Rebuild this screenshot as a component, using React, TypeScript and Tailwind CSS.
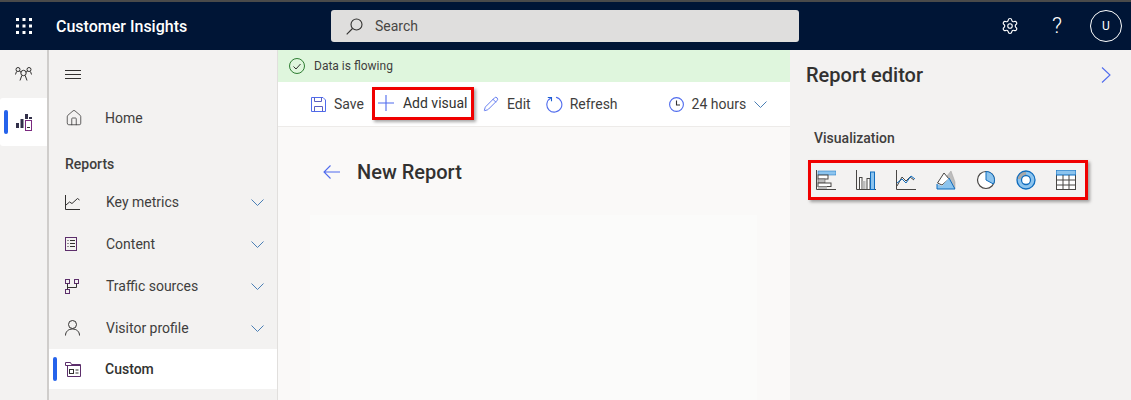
import React from 'react';
import { Settings, Pencil, Home } from 'lucide-react';

const GridDots = () => (
  <svg width="16" height="16" viewBox="0 0 16 16" fill="white">
    {[0, 6.5, 13].map((y) =>
      [0, 6.5, 13].map((x) => <rect key={`${x}-${y}`} x={x} y={y} width="3" height="3" />)
    )}
  </svg>
);

const SearchGlass = () => (
  <svg width="17" height="17" viewBox="0 0 17 17" fill="none" stroke="#323130" strokeWidth="1.100">
    <circle cx="10.500" cy="6.500" r="5.500" />
    <path d="M6.500 10.500L.7 16.300" />
  </svg>
);

const Chevron = () => (
  <svg width="13" height="7" viewBox="0 0 13 7" fill="none" stroke="#4a7fb5">
    <path d="M.5.5l6 6 6-6" />
  </svg>
);

const PeopleIcon = () => (
  <svg width="17" height="14" viewBox="0 0 17 14" fill="none" stroke="#323130">
    <circle cx="3" cy="2.500" r="2" />
    <circle cx="14" cy="2.500" r="2" />
    <circle cx="8.500" cy="6" r="2.700" />
    <path d="M.5 7.500L1.500 4.500M16.500 7.500L15.500 4.500M4.500 4.500L6.300 5M12.500 4.500L10.700 5M5 13.500L6.800 8.500M12 13.500L10.200 8.500" />
  </svg>
);

const ReportsIcon = () => (
  <svg width="16" height="17" viewBox="0 0 16 17">
    <rect x="0" y="9" width="3" height="5" fill="#32304a" />
    <rect x="4.500" y="5" width="3" height="9" fill="#32304a" />
    <rect x="9" y="0" width="3" height="5" fill="#32304a" />
    <rect x="13" y="3" width="3" height="2" fill="#32304a" />
    <rect x="9.500" y="6.500" width="6" height="10" fill="none" stroke="#7a2a80" />
    <path d="M11 13.500h3" stroke="#323130" />
  </svg>
);

const LineChartIcon = () => (
  <svg width="15" height="15" viewBox="0 0 15 15" fill="none" stroke="#323130">
    <path d="M.5 0v14.500H15M1 10l3.500-3 2.500 1.500 5.500-5 2 1.500" />
  </svg>
);

const ContentIcon = () => (
  <svg width="12" height="14" viewBox="0 0 12 14" fill="none" stroke="#5c2e6b">
    <rect x=".5" y=".5" width="11" height="13" />
    <path d="M2.500 3.500h1M5 3.500h5M2.500 6.500h1M5 6.500h5M2.500 9.500h1M5 9.500h5" stroke="#323130" />
  </svg>
);

const TrafficIcon = () => (
  <svg width="14" height="15" viewBox="0 0 14 15" fill="none">
    <rect x=".5" y=".5" width="4" height="4" stroke="#5c2e6b" />
    <rect x="9.500" y=".5" width="4" height="4" stroke="#5c2e6b" />
    <rect x=".5" y="10.500" width="4" height="4" stroke="#5c2e6b" />
    <path d="M2.500 4.500v6M2.500 8.500h9v-4" stroke="#323130" />
  </svg>
);

const UserIcon = () => (
  <svg width="15" height="16" viewBox="0 0 15 16" fill="none" stroke="#323130">
    <circle cx="7.500" cy="4.500" r="4" />
    <path d="M.5 15.500c0-4 3-6.500 7-6.500s7 2.500 7 6.500" />
  </svg>
);

const CustomIcon = () => (
  <svg width="16" height="15" viewBox="0 0 16 15" fill="none">
    <path d="M.5 3.500v-3h5l1 2h9v12h-13v-11" stroke="#5c2e6b" />
    <path d="M.5 3.500h15" stroke="#5c2e6b" />
    <rect x="4.500" y="7.500" width="4" height="4" stroke="#323130" />
    <path d="M10.500 8h3M10.500 11h3" stroke="#323130" />
  </svg>
);

const SaveIcon = () => (
  <svg width="15" height="15" viewBox="0 0 15 15" fill="none" stroke="#4f6bed">
    <path d="M.5.5h11.500l2.500 2.500v11.500H.5z" />
    <path d="M3.500.5v4h7v-4M3.500 14.500v-5h8v5" stroke="#5a5fc0" />
  </svg>
);

const PlusIcon = () => (
  <svg width="16" height="16" viewBox="0 0 16 16" fill="none" stroke="#4f6bed" strokeWidth="1.100">
    <path d="M8 0v16M0 8h16" />
  </svg>
);

const RefreshIcon = () => (
  <svg width="17" height="17" viewBox="0 0 17 17" fill="none" stroke="#4f6bed" strokeWidth="1.100">
    <path d="M5 1.900A7.500 7.500 0 1 0 10 1.300" />
    <path d="M1.800 1.500h3.700v3.700" stroke="#1a5fd0" />
  </svg>
);

const ClockIcon = () => (
  <svg width="15" height="15" viewBox="0 0 15 15" fill="none" stroke="#4f6bed" strokeWidth="1.100">
    <circle cx="7.500" cy="7.500" r="6.900" />
    <path d="M7.500 3.500v4.500h3.500" stroke="#323130" />
  </svg>
);

const FlowingIcon = () => (
  <svg width="16" height="16" viewBox="0 0 16 16" fill="none">
    <circle cx="8" cy="8" r="7.500" stroke="#2e7d32" />
    <path d="M4.500 8.500l2.500 2.500 4.500-5" stroke="#323130" />
  </svg>
);

const ArrowLeftIcon = () => (
  <svg width="17" height="14" viewBox="0 0 17 14" fill="none" stroke="#4f6bed" strokeWidth="1.100">
    <path d="M17 7H1M7.500.5L1 7l6.500 6.500" />
  </svg>
);

const CollapseIcon = () => (
  <svg width="10" height="16" viewBox="0 0 10 16" fill="none" stroke="#4f6bed" strokeWidth="1.100">
    <path d="M1 .5L9 8l-8 7.500" />
  </svg>
);

const BLUE = '#0f6cbd';
const LIGHT = '#8cc4ee';
const GRAY = '#bdbdbd';
const DARK = '#484644';

const viz = [
  <>
    <rect x="2" y="1" width="18" height="4" fill={LIGHT} stroke={BLUE} strokeWidth=".5" />
    <rect x="2" y="5" width="10" height="4" fill="#fff" stroke={DARK} />
    <rect x="2" y="9" width="7" height="4" fill={GRAY} stroke={DARK} strokeWidth=".5" />
    <rect x="2" y="13" width="13" height="3.500" fill="#fff" stroke={DARK} />
    <rect x="2" y="16.500" width="9" height="2.500" fill={GRAY} />
    <path d="M.5 0v19.500H20" stroke={DARK} fill="none" />
  </>,
  <>
    <path d="M.5 0v19.500H20" stroke={DARK} fill="none" />
    <rect x="3.500" y="7.500" width="2.500" height="12" fill="#fff" stroke={DARK} />
    <rect x="6.500" y="11" width="3" height="8" fill={GRAY} />
    <rect x="11" y="8.500" width="3" height="11" fill="#fff" stroke={DARK} />
    <rect x="14.500" y="2" width="4" height="17.500" fill={LIGHT} stroke={BLUE} />
  </>,
  <>
    <path d="M.5 0v19.500H20" stroke={DARK} fill="none" />
    <path d="M1 16l5-9 4 4 4-4 4 3" stroke={DARK} fill="none" />
    <path d="M1 13l5-4 4 4 5-7 4 3" stroke={BLUE} fill="none" />
  </>,
  <>
    <path d="M11 6l4-5 4 11v6h-5z" fill={GRAY} stroke="#a19f9d" strokeWidth=".5" />
    <path d="M1.500 13L8 3l5 6-7 6z" fill="#fff" stroke={DARK} />
    <path d="M1 19v-5l5 2 7-8 6 11z" fill={LIGHT} />
    <path d="M1 14v5h18L13 8" fill="none" stroke={BLUE} />
  </>,
  <>
    <circle cx="10" cy="10" r="8.500" fill="#fff" stroke={DARK} strokeWidth="1.200" />
    <path d="M10 1.500A8.500 8.500 0 0 1 17.500 14L10 10z" fill={LIGHT} stroke={BLUE} />
  </>,
  <>
    <circle cx="10" cy="10" r="7" fill="none" stroke={LIGHT} strokeWidth="4" />
    <path d="M10 3a7 7 0 0 0-7 6" fill="none" stroke="#a8a8a8" strokeWidth="4" />
    <circle cx="10" cy="10" r="9" fill="none" stroke={BLUE} strokeWidth="1.300" />
    <circle cx="10" cy="10" r="4.500" fill="#fff" stroke={BLUE} strokeWidth="1.300" />
  </>,
  <>
    <rect x=".5" y="4.500" width="19" height="15" fill="#fff" stroke={DARK} />
    <rect x="0" y="0" width="20" height="5" fill={LIGHT} stroke={BLUE} />
    <path d="M7 5v15M13 5v15M0 10h20M0 15h20" stroke={DARK} />
  </>,
];

const NavItem = ({ icon, label, chevron, active }: { icon: React.ReactNode; label: string; chevron?: boolean; active?: boolean }) => (
  <div className={`flex items-center h-[40px] pr-[13px] relative ${active ? 'bg-white' : ''}`}>
    {active && <div className="absolute left-[4px] top-[8px] w-[4px] h-[24px] rounded-sm bg-[#2563eb]" />}
    <div className={`${chevron ? 'w-[57px]' : 'w-[56px]'} pl-[16px] flex items-center justify-start`}>{icon}</div>
    <span className={`text-[14px] flex-1 ${active ? 'text-[#323130] font-medium' : 'text-[#3f3e3d]'}`}>{label}</span>
    {chevron && <Chevron />}
  </div>
);

export default function App() {
  return (
    <div className="font-['Roboto','Open_Sans',sans-serif] w-[1131px] h-[400px] overflow-hidden flex flex-col bg-[#f3f2f1]">
      <div className="h-[2px] bg-[#4a4a4a]" />
      <header className="h-[48px] bg-[#001536] flex items-center text-white">
        <div className="w-[48px] pl-[16px]"><GridDots /></div>
        <div className="w-[283px] pl-[8px] text-[16px] font-medium pt-[1px]">Customer Insights</div>
        <div className="w-[468px] h-[32px] bg-[#dfdedd] rounded-[3px] flex items-center pl-[15px] gap-[12px] text-[#484644] text-[14px]">
          <SearchGlass />
          <span className="pt-[1px]">Search</span>
        </div>
        <div className="flex-1 flex items-center justify-end pr-[9px]">
          <Settings size={18} strokeWidth={1.500} />
          <span className="ml-[32px] text-[22px] leading-none font-light w-[12px] text-center">?</span>
          <div className="ml-[27px] w-[32px] h-[32px] rounded-full border border-white flex items-center justify-center text-[12px]">U</div>
        </div>
      </header>
      <div className="flex-1 flex min-h-0">
        <aside className="w-[49px] border-r-2 border-[#cfcdcb] flex flex-col">
          <div className="h-[48px] flex items-center justify-center"><PeopleIcon /></div>
          <div className="h-[48px] bg-white rounded-l-[3px] relative flex items-center justify-center">
            <div className="absolute left-[4px] top-[12px] w-[4px] h-[24px] rounded-sm bg-[#2563eb]" />
            <ReportsIcon />
          </div>
        </aside>
        <nav className="w-[229px] border-r border-[#e1dfdd] flex flex-col">
          <div className="h-[48px] flex items-center pl-[16px]">
            <div className="w-[16px] h-[9px] border-y border-[#323130] relative">
              <div className="absolute top-[3px] w-full h-px bg-[#323130]" />
            </div>
          </div>
          <NavItem icon={<Home size={18} strokeWidth={1} color="#323130" />} label="Home" />
          <div className="h-[44px] flex items-center pl-[16px] text-[14px] font-medium text-[#3f3e3d] pt-[8px]">Reports</div>
          <div className="flex flex-col gap-[2px]">
            <NavItem icon={<LineChartIcon />} label="Key metrics" chevron />
            <NavItem icon={<ContentIcon />} label="Content" chevron />
            <NavItem icon={<TrafficIcon />} label="Traffic sources" chevron />
            <NavItem icon={<UserIcon />} label="Visitor profile" chevron />
            <div className="-mt-[1px]">
              <NavItem icon={<CustomIcon />} label="Custom" active />
            </div>
          </div>
        </nav>
        <main className="w-[512px] flex flex-col bg-[#faf9f8]">
          <div className="h-[32px] bg-[#dff6dd] flex items-center pl-[11px] gap-[9px] text-[12px] text-[#3f3e3d]">
            <FlowingIcon />
            Data is flowing
          </div>
          <div className="h-[45px] bg-white border-b border-[#edebe9] flex items-center pl-[33px] text-[14px] text-[#3f3e3d]">
            <div className="flex items-center gap-[8px]"><SaveIcon />Save</div>
            <div className="ml-[8px] h-[33px] w-[102px] flex items-center gap-[9px] pl-[3px] border-[3px] border-[#f00000] shadow-[2px_2px_3px_rgba(0,0,0,0.35)] -mt-[2px]">
              <PlusIcon />
              <span className="text-[#323130]">Add visual</span>
            </div>
            <div className="ml-[9px] flex items-center gap-[8px]"><Pencil size={16} strokeWidth={1.300} color="#4f6bed" />Edit</div>
            <div className="ml-[15px] flex items-center gap-[7px]"><RefreshIcon />Refresh</div>
            <div className="ml-[51px] flex items-center gap-[8px]">
              <ClockIcon />24 hours
              <Chevron />
            </div>
          </div>
          <div className="flex-1 relative">
            <div className="flex items-center pl-[45px] pt-[31px] gap-[17px]">
              <ArrowLeftIcon />
              <h1 className="text-[20px] font-medium text-[#323130] leading-[28px]">New Report</h1>
            </div>
            <div className="absolute left-[32px] right-[33px] top-[88px] bottom-0 bg-[#fbfbfa]" />
          </div>
        </main>
        <section className="flex-1 flex flex-col">
          <div className="h-[50px] flex items-center justify-between pl-[16px] pr-[20px]">
            <h2 className="text-[20px] font-medium text-[#323130]">Report editor</h2>
            <CollapseIcon />
          </div>
          <div className="pl-[24px] pt-[28px] text-[14px] font-medium text-[#3f3e3d]">Visualization</div>
          <div className="ml-[18px] mt-[11px] w-[280px] h-[40px] border-[3px] border-[#f00000] shadow-[2px_2px_3px_rgba(0,0,0,0.35)] flex items-center pl-[5px] gap-[20px]">
            {viz.map((v, i) => (
              <svg key={i} width="20" height="20" viewBox="0 0 20 20">{v}</svg>
            ))}
          </div>
        </section>
      </div>
    </div>
  );
}
